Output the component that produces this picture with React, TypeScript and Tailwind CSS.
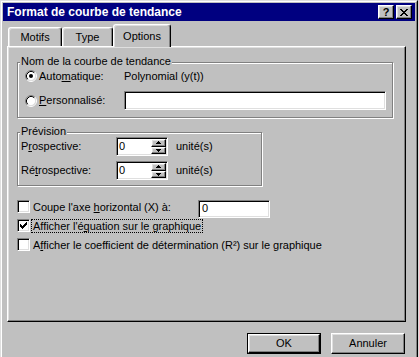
import React from "react";

const raised =
  "border border-t-white border-l-white border-r-black border-b-black shadow-[inset_-1px_-1px_0_#808080,inset_1px_1px_0_#dfdfdf]";
const sunken =
  "border border-t-[#808080] border-l-[#808080] border-r-white border-b-white shadow-[inset_1px_1px_0_#000,inset_-1px_-1px_0_#dfdfdf]";
const etched =
  "border border-[#808080] shadow-[inset_1px_1px_0_#fff,1px_1px_0_#fff]";

const Radio = ({ checked }: { checked?: boolean }) => (
  <svg width="12" height="12" viewBox="0 0 12 12" className="shrink-0">
    <circle cx="6" cy="6" r="4.5" fill="#fff" />
    <path d="M2.11 9.89A5.5 5.5 0 0 1 9.89 2.11" fill="none" stroke="#808080" />
    <path d="M9.89 2.11A5.5 5.5 0 0 1 2.11 9.89" fill="none" stroke="#fff" />
    <path d="M2.82 9.18A4.5 4.5 0 0 1 9.18 2.82" fill="none" stroke="#000" />
    <path d="M9.18 2.82A4.5 4.5 0 0 1 2.82 9.18" fill="none" stroke="#dfdfdf" />
    {checked && <circle cx="6" cy="6" r="2" fill="#000" />}
  </svg>
);

const Check = ({ checked }: { checked?: boolean }) => (
  <div
    className={`${sunken} w-[13px] h-[13px] bg-white shrink-0 flex items-center justify-center`}
  >
    {checked && (
      <svg width="7" height="7" viewBox="0 0 7 7" shapeRendering="crispEdges">
        <path
          d="M6 0h1v1h-1zM5 1h2v1h-2zM0 2h1v1h-1zM4 2h3v1h-3zM0 3h2v1h-2zM3 3h3v1h-3zM0 4h5v1h-5zM1 5h3v1h-3zM2 6h1v1h-1z"
          fill="#000"
        />
      </svg>
    )}
  </div>
);

const Arrow = ({ up }: { up?: boolean }) => (
  <svg width="5" height="3" viewBox="0 0 5 3" shapeRendering="crispEdges">
    <path d={up ? "M2 0h1v1h1v1h1v1H0V2h1V1h1z" : "M0 0h5v1H4v1H3v1H2V2H1V1H0z"} fill="#000" />
  </svg>
);

const Spin = () => (
  <div className={`${sunken} w-[52px] h-[19px] bg-white flex`}>
    <span className="flex-1 pl-[2px] leading-[17px]">0</span>
    <div className="flex flex-col w-[16px] py-[1px] pr-[1px]">
      <div className={`${raised} bg-[#c0c0c0] flex-1 flex items-center justify-center`}>
        <Arrow up />
      </div>
      <div className={`${raised} bg-[#c0c0c0] flex-1 flex items-center justify-center`}>
        <Arrow />
      </div>
    </div>
  </div>
);

const Tab = ({ label, active, w }: { label: string; active?: boolean; w: string }) => (
  <div
    className={`${w} flex items-center justify-center pt-[1px] bg-[#c0c0c0] border-l border-t border-r border-l-white border-t-white border-r-black rounded-t-[3px] shadow-[inset_-1px_0_0_#808080,inset_1px_1px_0_#dfdfdf] ${
      active ? "h-[23px] -mb-[1px] relative z-10" : "h-[19px]"
    }`}
  >
    {label}
  </div>
);

export default function App() {
  return (
    <div className="w-[419px] h-[357px] overflow-hidden bg-[#d6d6d6] font-['Liberation_Sans',Arial,sans-serif] text-[11px] tracking-[-0.02px] text-black">
      <div className="w-[418px] h-[380px] border border-t-[#dfdfdf] border-l-[#dfdfdf] border-r-black border-b-black">
        <div className="h-full border border-t-white border-l-white border-r-[#808080] border-b-[#808080] bg-[#c0c0c0] p-[1px]">
          {/* title bar */}
          <div className="h-[18px] bg-[#000080] flex items-center pl-[4px] pr-[3px]">
            <span className="text-white font-bold text-[12px] tracking-normal">
              Format de courbe de tendance
            </span>
            <div className="ml-auto flex gap-[2px]">
              <div className={`${raised} w-[16px] h-[14px] bg-[#c0c0c0] flex items-center justify-center font-bold text-[11px] leading-none`}>
                ?
              </div>
              <div className={`${raised} w-[16px] h-[14px] bg-[#c0c0c0] flex items-center justify-center`}>
                <svg width="8" height="7" viewBox="0 0 8 7" shapeRendering="crispEdges">
                  <path
                    d="M0 0h2v1h1v1h2V1h1V0h2v1H7v1H6v1H5v1h1v1h1v1h1v1H6V6H5V5H3v1H2v1H0V6h1V5h1V4h1V3H2V2H1V1H0z"
                    fill="#000"
                  />
                </svg>
              </div>
            </div>
          </div>

          <div className="pl-[4px] w-[403px]">
            {/* tabs */}
            <div className="h-[25px] flex items-end pl-[1px]">
              <Tab label="Motifs" w="w-[54px]" />
              <Tab label="Type" w="w-[51px]" />
              <Tab label="Options" w="w-[58px]" active />
            </div>

            {/* panel */}
            <div className="w-[399px] h-[276px] border border-t-white border-l-white border-r-black border-b-black shadow-[inset_-1px_-1px_0_#808080,inset_1px_1px_0_#dfdfdf] flex flex-col">
              <div className={`relative ml-[9px] mt-[15px] w-[376px] h-[56px] ${etched}`}>
                <span className="absolute left-[2px] -top-[8px] bg-[#c0c0c0] px-[1px] leading-[13px]">
                  Nom de la courbe de tendance
                </span>
                <div className="flex flex-col pt-[4px] gap-[6px]">
                  <div className="flex items-center h-[18px]">
                    <div className="w-[106px] flex items-center pl-[7px] gap-[2px]">
                      <Radio checked />
                      <span>
                        Auto<u>m</u>atique:
                      </span>
                    </div>
                    <span>Polynomial (y(t))</span>
                  </div>
                  <div className="flex items-center h-[19px]">
                    <div className="w-[106px] flex items-center pl-[7px] gap-[2px]">
                      <Radio />
                      <span>
                        <u>P</u>ersonnalisé:
                      </span>
                    </div>
                    <div className={`${sunken} w-[262px] h-[19px] bg-white`} />
                  </div>
                </div>
              </div>

              <div className={`relative ml-[9px] mt-[14px] w-[245px] h-[54px] ${etched}`}>
                <span className="absolute left-[2px] -top-[8px] bg-[#c0c0c0] px-[1px] leading-[13px]">
                  Prévision
                </span>
                <div className="flex flex-col pt-[4px] gap-[5px]">
                  <div className="flex items-center h-[19px]">
                    <span className="w-[98px] pl-[3px]">
                      P<u>r</u>ospective:
                    </span>
                    <Spin />
                    <span className="ml-[8px]">unité(s)</span>
                  </div>
                  <div className="flex items-center h-[19px]">
                    <span className="w-[98px] pl-[3px]">
                      Ré<u>t</u>rospective:
                    </span>
                    <Spin />
                    <span className="ml-[8px]">unité(s)</span>
                  </div>
                </div>
              </div>

              <div className="flex flex-col mt-[14px] ml-[9px]">
                <div className="flex items-start h-[19px]">
                  <Check />
                  <span className="ml-[1px] w-[167px] border border-transparent px-[1px] leading-[12px]">
                    Coupe l'axe <u>h</u>orizontal (X) à:
                  </span>
                  <div className={`${sunken} w-[72px] h-[18px] bg-white pl-[3px] leading-[14px]`}>0</div>
                </div>
                <div className="flex items-start h-[19px]">
                  <Check checked />
                  <span className="ml-[1px] border border-dotted border-black px-[1px] leading-[12px]">
                    Afficher l'é<u>q</u>uation sur le graphique
                  </span>
                </div>
                <div className="flex items-start h-[19px]">
                  <Check />
                  <span className="ml-[1px] border border-transparent px-[1px] leading-[12px]">
                    A<u>f</u>ficher le coefficient de détermination (R²) sur le graphique
                  </span>
                </div>
              </div>
            </div>

            {/* buttons */}
            <div className="flex justify-end gap-[10px] pr-[1px] mt-[11px]">
              <div className="w-[74px] h-[21px] border border-black">
                <div className={`${raised} h-full bg-[#c0c0c0] flex items-center justify-center`}>OK</div>
              </div>
              <div className={`${raised} w-[74px] h-[21px] bg-[#c0c0c0] flex items-center justify-center`}>
                Annuler
              </div>
            </div>
          </div>
        </div>
      </div>
    </div>
  );
}
